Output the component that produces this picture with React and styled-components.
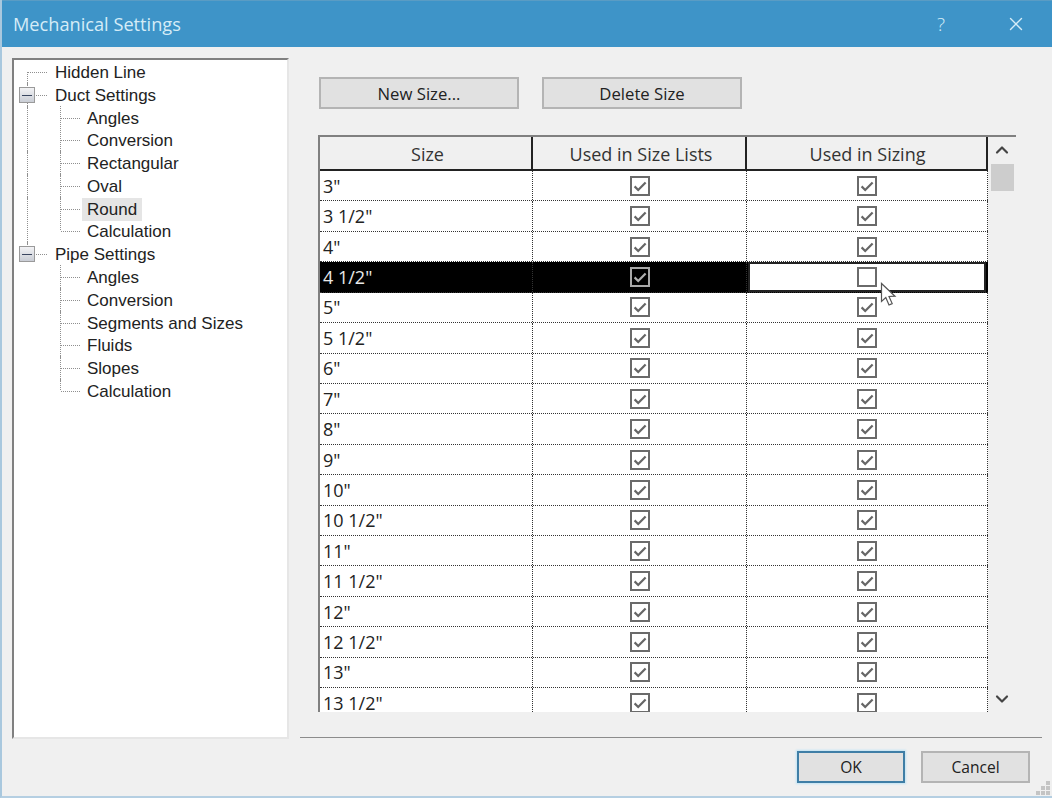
import React from "react";
import styled, { createGlobalStyle } from "styled-components";
import { X, ChevronUp, ChevronDown } from "lucide-react";

const Global = createGlobalStyle`
  html, body { margin: 0; padding: 0; background: #f0f0f0; }
  * { box-sizing: border-box; }
`;

const Window = styled.div`
  width: 1052px;
  height: 798px;
  display: flex;
  flex-direction: column;
  background: #f0f0f0;
  border-left: 2px solid #a9c8de;
  border-bottom: 2px solid #b5cfe2;
  overflow: hidden;
  font-family: "Open Sans", "Noto Sans", sans-serif;
  color: #222;
`;

const TitleBar = styled.div`
  height: 47px;
  margin-left: -2px;
  flex: none;
  display: flex;
  align-items: center;
  background: #3e94c8;
  border-top: 1px solid #5a9cc4;
  color: #d5ecf7;
  font-size: 18.2px;
  padding: 0 25px 0 13px;
`;

const Title = styled.div`
  flex: 1;
`;

const Help = styled.div`
  font-size: 19px;
  width: 68px;
  font-weight: 300;
`;

const Content = styled.div`
  flex: 1;
  display: flex;
  padding: 11px 10px 0 10px;
  gap: 11px;
  min-height: 0;
`;

const TreePanel = styled.div`
  width: 277px;
  height: 681px;
  flex: none;
  background: #fff;
  border-top: 2px solid #808080;
  border-left: 2px solid #808080;
  border-right: 2px solid #e6e6e6;
  border-bottom: 2px solid #e6e6e6;
  padding: 1px 0 0 5px;
  font-family: "Liberation Sans", Arial, sans-serif;
  font-size: 17px;
  color: #222;
`;

const TreeRow = styled.div`
  height: 22.8px;
  display: flex;
  align-items: center;
`;

const Guide = styled.svg`
  width: 32px;
  height: 23px;
  flex: none;
  overflow: visible;
  shape-rendering: crispEdges;
`;

const TreeLabel = styled.span`
  line-height: 23px;
  margin-left: ${(p) => (p.$selected ? "-1px" : "3px")};
  padding: 0 ${(p) => (p.$selected ? "5px" : "1px")};
  background: ${(p) => (p.$selected ? "#e5e5e5" : "transparent")};
`;

const RightColumn = styled.div`
  width: 742px;
  flex: none;
  display: flex;
  flex-direction: column;
`;

const ToolRow = styled.div`
  display: flex;
  gap: 23px;
  padding: 19px 0 0 19px;
`;

const Button = styled.button`
  width: ${(p) => p.$w || 200}px;
  height: 32px;
  padding: 0;
  background: #e1e1e1;
  border: 2px solid ${(p) => (p.$primary ? "#3f7ea6" : "#b4b4b4")};
  box-shadow: ${(p) => (p.$primary ? "0 0 2px 1px #bfe3f5" : "none")};
  font-family: "Open Sans", "Noto Sans", sans-serif;
  font-size: ${(p) => p.$size || 16.7}px;
  color: #222;
`;

const TableFrame = styled.div`
  margin: 26px 0 0 18px;
  width: 698px;
  height: 577px;
  display: flex;
  overflow: hidden;
  border-top: 2px solid #808080;
  border-left: 2px solid #808080;
  flex: none;
`;

const Grid = styled.div`
  width: 668px;
  flex: none;
  display: flex;
  flex-direction: column;
  background: #fff;
`;

const HeaderRow = styled.div`
  height: 34px;
  flex: none;
  display: grid;
  grid-template-columns: 213px 214px 241px;
  background: #f0f0f0;
  border-bottom: 2px solid #222;
`;

const HeaderCell = styled.div`
  display: flex;
  align-items: center;
  justify-content: center;
  padding: 1px 0 0 ${(p) => p.$inset || 2}px;
  font-size: 18px;
  color: #333;
  border-right: 2px solid #222;
`;

const Row = styled.div`
  height: 30.43px;
  flex: none;
  display: grid;
  grid-template-columns: 213px 214px 241px;
  background: ${(p) => (p.$selected ? "#000" : "#fff")};
  color: ${(p) => (p.$selected ? "#e8e8e8" : "#222")};
  border-bottom: 1px dotted #333;
`;

const SizeCell = styled.div`
  display: flex;
  align-items: center;
  padding-left: 3px;
  font-size: 18px;
  border-right: 1px dotted #333;
`;

const CheckCell = styled.div`
  display: flex;
  align-items: center;
  justify-content: center;
  background: ${(p) => (p.$active ? "#fff" : "transparent")};
  border: ${(p) => (p.$active ? "2px solid #222" : "none")};
  border-right: ${(p) => (p.$active ? "2px solid #222" : "1px dotted #333")};
  margin: ${(p) => (p.$active ? "0 2px 0 1px" : "0")};
`;

const Box = styled.svg`
  width: 20px;
  height: 20px;
  flex: none;
`;

const ScrollBar = styled.div`
  flex: 1;
  display: flex;
  flex-direction: column;
  align-items: center;
  background: #f0f0f0;
  color: #444;
  padding: 2px 2px 3px;
`;

const Arrow = styled.div`
  height: 21px;
  width: 100%;
  display: flex;
  align-items: center;
  justify-content: center;
`;

const Thumb = styled.div`
  width: 23px;
  height: 27px;
  margin-top: 4px;
  background: #cdcdcd;
`;

const Spacer = styled.div`
  flex: 1;
`;

const Divider = styled.div`
  height: 1px;
  margin-top: 25px;
  background: #8c8c8c;
`;

const Footer = styled.div`
  display: flex;
  justify-content: flex-end;
  gap: 16px;
  padding: 13px 12px 0 0;
`;

const Cursor = styled.svg`
  position: absolute;
  left: 880px;
  top: 282px;
  width: 17px;
  height: 25px;
`;

const Grip = styled.svg`
  position: absolute;
  right: 2px;
  bottom: 3px;
  width: 14px;
  height: 14px;
`;

const Root = styled.div`
  position: relative;
  width: 1052px;
  height: 798px;
`;

const LINE = "#8f8f8f";
const DOTS = "1 1";

function TreeGuide({ trunk, up, down, expander }) {
  return (
    <Guide viewBox="0 0 32 23">
      {trunk && <line x1="8.5" y1="-1" x2="8.5" y2="24" stroke={LINE} strokeDasharray={DOTS} />}
      {up && <line x1="8.5" y1="-1" x2="8.5" y2="11" stroke={LINE} strokeDasharray={DOTS} />}
      {down && <line x1="8.5" y1="11" x2="8.5" y2="24" stroke={LINE} strokeDasharray={DOTS} />}
      <line x1="9" y1="11.5" x2="29" y2="11.5" stroke={LINE} strokeDasharray={DOTS} />
      {expander && (
        <g>
          <defs>
            <linearGradient id="exp" x1="0" y1="0" x2="0" y2="1">
              <stop offset="0" stopColor="#f4f4f6" />
              <stop offset="1" stopColor="#c8ccd4" />
            </linearGradient>
          </defs>
          <rect x="0.5" y="3.5" width="15" height="15" rx="1" fill="url(#exp)" stroke="#9a9a9a" />
          <line x1="3" y1="11.5" x2="13" y2="11.5" stroke="#3a4660" strokeWidth="1.4" />
        </g>
      )}
    </Guide>
  );
}

function ChildGuide({ trunk, last }) {
  return (
    <>
      <Guide viewBox="0 0 32 23">
        {trunk && <line x1="8.5" y1="-1" x2="8.5" y2="24" stroke={LINE} strokeDasharray={DOTS} />}
      </Guide>
      <Guide viewBox="0 0 32 23">
        <line x1="9.5" y1="-1" x2="9.5" y2={last ? 11 : 24} stroke={LINE} strokeDasharray={DOTS} />
        <line x1="10" y1="11.5" x2="30" y2="11.5" stroke={LINE} strokeDasharray={DOTS} />
      </Guide>
    </>
  );
}

function Check({ checked, inverted }) {
  const c = inverted ? "#b0b0b0" : "#666";
  return (
    <Box viewBox="0 0 20 20">
      <rect x="1" y="1" width="18" height="18" fill={inverted ? "#000" : "#fff"} stroke={inverted ? "#a8a8a8" : "#6a6a6a"} strokeWidth="2" />
      {checked && <path d="M4.6 10.4 L8.2 14 L15.6 6.4" fill="none" stroke={c} strokeWidth="2.2" />}
    </Box>
  );
}

const duct = ["Angles", "Conversion", "Rectangular", "Oval", "Round", "Calculation"];
const pipe = ["Angles", "Conversion", "Segments and Sizes", "Fluids", "Slopes", "Calculation"];
const sizes = ['3"', '3 1/2"', '4"', '4 1/2"', '5"', '5 1/2"', '6"', '7"', '8"', '9"', '10"', '10 1/2"', '11"', '11 1/2"', '12"', '12 1/2"', '13"', '13 1/2"'];

export default function App() {
  return (
    <Root>
      <Global />
      <Window>
        <TitleBar>
          <Title>Mechanical Settings</Title>
          <Help>?</Help>
          <X size={22} strokeWidth={1.5} />
        </TitleBar>
        <Content>
          <TreePanel>
            <TreeRow>
              <TreeGuide down />
              <TreeLabel>Hidden Line</TreeLabel>
            </TreeRow>
            <TreeRow>
              <TreeGuide trunk expander />
              <TreeLabel>Duct Settings</TreeLabel>
            </TreeRow>
            {duct.map((d, i) => (
              <TreeRow key={d}>
                <ChildGuide trunk last={i === duct.length - 1} />
                <TreeLabel $selected={d === "Round"}>{d}</TreeLabel>
              </TreeRow>
            ))}
            <TreeRow>
              <TreeGuide up expander />
              <TreeLabel>Pipe Settings</TreeLabel>
            </TreeRow>
            {pipe.map((d, i) => (
              <TreeRow key={d}>
                <ChildGuide last={i === pipe.length - 1} />
                <TreeLabel>{d}</TreeLabel>
              </TreeRow>
            ))}
          </TreePanel>
          <RightColumn>
            <ToolRow>
              <Button>New Size...</Button>
              <Button>Delete Size</Button>
            </ToolRow>
            <TableFrame>
              <Grid>
                <HeaderRow>
                  <HeaderCell $inset={4}>Size</HeaderCell>
                  <HeaderCell $inset={4}>Used in Size Lists</HeaderCell>
                  <HeaderCell>Used in Sizing</HeaderCell>
                </HeaderRow>
                {sizes.map((s) => {
                  const sel = s === '4 1/2"';
                  return (
                    <Row key={s} $selected={sel}>
                      <SizeCell>{s}</SizeCell>
                      <CheckCell>
                        <Check checked inverted={sel} />
                      </CheckCell>
                      <CheckCell $active={sel}>
                        <Check checked={!sel} />
                      </CheckCell>
                    </Row>
                  );
                })}
              </Grid>
              <ScrollBar>
                <Arrow>
                  <ChevronUp size={20} strokeWidth={2.6} />
                </Arrow>
                <Thumb />
                <Spacer />
                <Arrow>
                  <ChevronDown size={20} strokeWidth={2.6} />
                </Arrow>
              </ScrollBar>
            </TableFrame>
            <Divider />
            <Footer>
              <Button $w={108} $size={15.6} $primary>OK</Button>
              <Button $w={109} $size={15.6}>Cancel</Button>
            </Footer>
          </RightColumn>
        </Content>
      </Window>
      <Cursor viewBox="0 0 17 25">
        <path d="M1.5 1.5 V19.5 L5.8 15.6 L9 23 L12.2 21.6 L9 14.5 L15 14.2 Z" fill="#fff" stroke="#555" strokeWidth="1.2" />
      </Cursor>
      <Grip viewBox="0 0 14 14" fill="#c4c4c4">
        <rect x="10" y="0" width="4" height="4" />
        <rect x="5" y="5" width="4" height="4" />
        <rect x="10" y="5" width="4" height="4" />
        <rect x="0" y="10" width="4" height="4" />
        <rect x="5" y="10" width="4" height="4" />
        <rect x="10" y="10" width="4" height="4" />
      </Grip>
    </Root>
  );
}
